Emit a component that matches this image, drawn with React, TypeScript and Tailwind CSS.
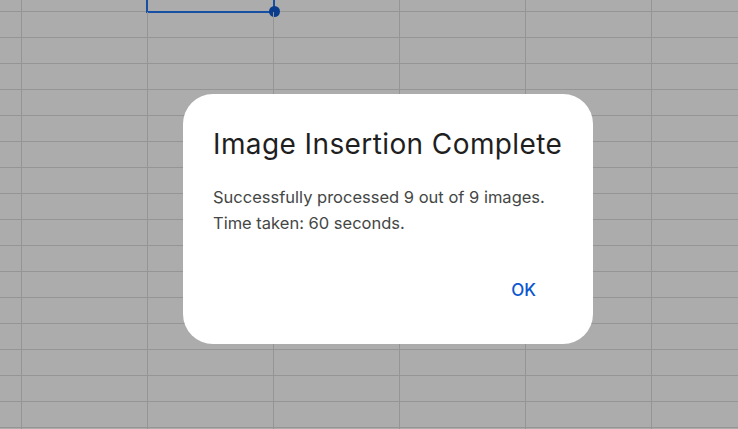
const COLS = 6;
const ROWS = 18;

function Sheet() {
  return (
    <div className="flex flex-col">
      {Array.from({ length: ROWS }).map((_, r) => (
        <div key={r} className={`flex shrink-0 ${r === 0 ? "h-[12px]" : "h-[26px]"} border-b border-[#959595]`}>
          <div className="w-[22px] shrink-0 border-r border-[#959595]" />
          {Array.from({ length: COLS }).map((_, c) => (
            <div key={c} className="relative w-[126px] shrink-0 border-r border-[#959595]">
              {r === 0 && c === 1 && (
                <>
                  <div className="absolute left-[-2px] right-[-2px] top-[-4px] bottom-[-2px] border-2 border-[#174fa3]" />
                  <div className="absolute right-[-7px] bottom-[-6px] w-[11px] h-[11px] rounded-full bg-[#0a3c8e]" />
                </>
              )}
            </div>
          ))}
        </div>
      ))}
    </div>
  );
}

export default function App() {
  return (
    <div className="relative w-[738px] h-[429px] overflow-hidden bg-[#acacac] font-['Inter',sans-serif]">
      <Sheet />

      <div className="absolute left-[183px] top-[94px] w-[410px] h-[250px] rounded-[30px] bg-white flex flex-col pl-[30px] pr-[20px] pt-[32px] whitespace-nowrap">
        <h2 className="text-[28px] leading-[36px] text-[#1f1f1f] tracking-[0.4px]">Image Insertion Complete</h2>
        <div className="mt-[22px] text-[16.5px] leading-[26px] text-[#444746]">
          <p>Successfully processed 9 out of 9 images.</p>
          <p>Time taken: 60 seconds.</p>
        </div>
        <div className="flex justify-end mt-[42px] pr-[37px]">
          <button className="text-[17px] font-medium text-[#0b57d0]">OK</button>
        </div>
      </div>
    </div>
  );
}
